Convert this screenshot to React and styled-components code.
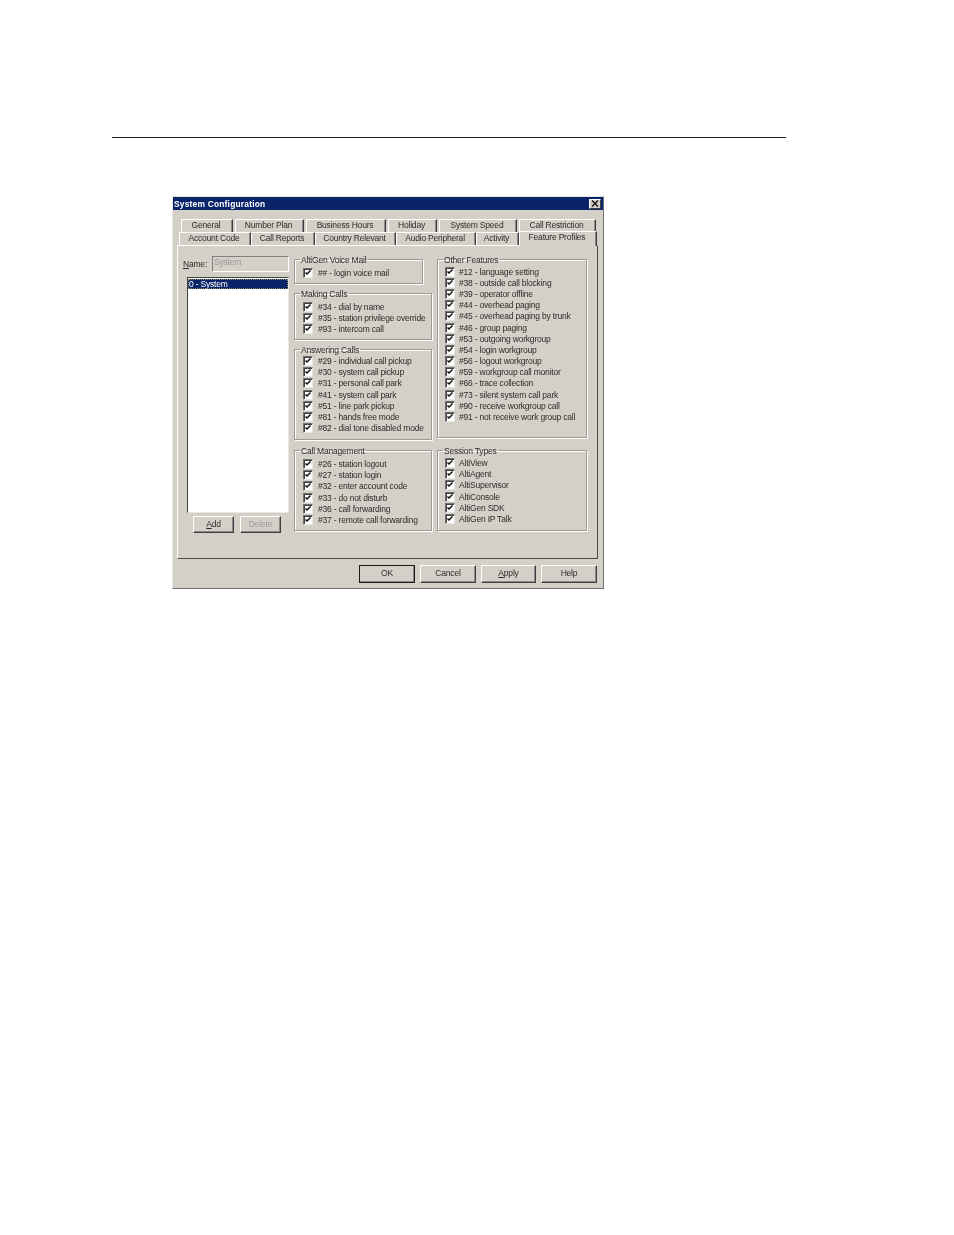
import styled, { createGlobalStyle } from "styled-components";

const GlobalStyle = createGlobalStyle`
  html, body {
    margin: 0;
    background: #ffffff;
    font-family: "Liberation Sans", Arial, sans-serif;
  }
`;

const Page = styled.div`
  width: 954px;
  height: 1235px;
  padding-top: 137px;
  box-sizing: border-box;
  overflow: hidden;
`;

const Rule = styled.div`
  width: 674px;
  height: 1px;
  margin-left: 112px;
  background: #1c1c1c;
`;

const Dialog = styled.div`
  width: 432px;
  height: 393px;
  margin: 58px 0 0 172px;
  box-sizing: border-box;
  background: #d4d0c8;
  border: 1px solid;
  border-color: #e8e6e0 #6f6f6f #6f6f6f #e8e6e0;
  display: flex;
  flex-direction: column;
  font-size: 8.5px;
  letter-spacing: -0.2px;
  color: #2c2c2c;
  filter: blur(0.25px);
`;

const TitleBar = styled.div`
  height: 13px;
  flex: none;
  background: #0a246a;
  color: #ffffff;
  font-weight: bold;
  font-size: 8.4px;
  letter-spacing: 0.22px;
  padding: 1px 2px 0 1px;
  box-sizing: border-box;
  display: flex;
  align-items: center;
  justify-content: space-between;
`;

const CloseButton = styled.div`
  width: 12px;
  height: 10px;
  margin-top: -1px;
  box-sizing: border-box;
  background: #d4d0c8;
  border: 1px solid;
  border-color: #ffffff #404040 #404040 #ffffff;
  display: flex;
  align-items: center;
  justify-content: center;
`;

const TabRow = styled.div`
  display: flex;
  height: ${(p) => p.$height}px;
  margin-left: ${(p) => p.$left}px;
  margin-top: ${(p) => p.$top}px;
  flex: none;
`;

const Tab = styled.div`
  width: ${(p) => p.$width}px;
  margin-right: ${(p) => p.$gap || 0}px;
  height: ${(p) => (p.$active ? 15 : 13)}px;
  margin-top: ${(p) => (p.$active ? -1 : 0)}px;
  box-sizing: border-box;
  position: relative;
  z-index: ${(p) => (p.$active ? 2 : 0)};
  background: #d4d0c8;
  border-top: 1px solid #ffffff;
  border-left: 1px solid #ffffff;
  border-right: 1px solid #3c3c3c;
  box-shadow: inset -1px 0 0 #8a8a8a;
  padding-right: 2px;
  text-align: center;
  line-height: 11px;
  white-space: nowrap;
`;

const Panel = styled.div`
  width: 421px;
  height: 314px;
  margin-left: 4px;
  flex: none;
  box-sizing: border-box;
  border: 1px solid;
  border-color: #ffffff #4a4a4a #4a4a4a #ffffff;
  padding: 8px 0 0 9px;
  display: grid;
  grid-template-columns: 102px 138px 150px;
  column-gap: 5px;
  position: relative;
  z-index: 1;
`;

const LeftColumn = styled.div`
  display: flex;
  flex-direction: column;
`;

const NameRow = styled.div`
  display: flex;
  align-items: center;
  height: 17px;
  margin-top: 1px;
  justify-content: space-between;
`;

const NameLabel = styled.span`
  margin-left: -4px;
  & u {
    text-decoration: underline;
  }
`;

const NameInput = styled.div`
  width: 77px;
  height: 16px;
  box-sizing: border-box;
  border: 1px solid;
  border-color: #808080 #ffffff #ffffff #808080;
  color: #9a9a9a;
  line-height: 11px;
  padding-left: 1px;
`;

const ListBox = styled.div`
  width: 102px;
  height: 236px;
  margin-top: 5px;
  box-sizing: border-box;
  background: #ffffff;
  border: 1px solid;
  border-color: #404040 #e8e6e0 #e8e6e0 #404040;
`;

const ListItem = styled.div`
  height: 10px;
  margin: 1px 0 0 0;
  background: #0a246a;
  color: #ffffff;
  line-height: 10px;
  padding-left: 1px;
  outline: 1px dotted #8a8a60;
  outline-offset: -1px;
`;

const ListButtons = styled.div`
  display: flex;
  gap: 6px;
  margin: 3px 0 0 6px;
`;

const Button = styled.div`
  width: ${(p) => p.$width}px;
  height: ${(p) => p.$height}px;
  box-sizing: border-box;
  background: #d4d0c8;
  color: ${(p) => (p.$disabled ? "#9a9a9a" : "#2c2c2c")};
  border: 1px solid;
  border-color: #ffffff #404040 #404040 #ffffff;
  box-shadow: inset -1px -1px 0 #8a8a8a;
  outline: ${(p) => (p.$primary ? "1px solid #1a1a1a" : "none")};
  outline-offset: -1px;
  text-align: center;
  line-height: ${(p) => p.$height - 3}px;
  & u {
    text-decoration: underline;
  }
`;

const GroupColumn = styled.div`
  display: flex;
  flex-direction: column;
`;

const Group = styled.fieldset`
  margin: ${(p) => p.$top || 0}px 0 0 0;
  padding: ${(p) => p.$pad}px 0 0 ${(p) => p.$inset}px;
  width: ${(p) => p.$width || "auto"};
  height: ${(p) => p.$height}px;
  box-sizing: border-box;
  min-width: 0;
  border: 1px solid #9a9a96;
  box-shadow: inset 1px 1px 0 #ffffff, 1px 1px 0 #ffffff;
`;

const Legend = styled.legend`
  margin-left: ${(p) => 5 - p.$inset}px;
  padding: 0 1px;
  height: 10px;
  line-height: 12px;
  white-space: nowrap;
`;

const Row = styled.div`
  display: flex;
  align-items: center;
  height: 11.2px;
  white-space: nowrap;
`;

const Box = styled.span`
  width: 10px;
  height: 10px;
  flex: none;
  margin-right: ${(p) => p.$gap}px;
  box-sizing: border-box;
  background: #ffffff;
  border: 1px solid;
  border-color: #707070 #e8e6e0 #e8e6e0 #707070;
  box-shadow: inset 1px 1px 0 #404040;
  display: flex;
  align-items: center;
  justify-content: center;
`;

const Footer = styled.div`
  display: flex;
  justify-content: flex-end;
  gap: 5px;
  margin-top: 6px;
  padding-right: 6px;
`;

const tabsTop = [
  ["General", 52, 2],
  ["Number Plan", 69, 2],
  ["Business Hours", 80, 2],
  ["Holiday", 49, 2],
  ["System Speed", 78, 2],
  ["Call Restriction", 77, 0],
];

const tabsBottom = [
  ["Account Code", 72],
  ["Call Reports", 64],
  ["Country Relevant", 81],
  ["Audio Peripheral", 80],
  ["Activity", 43],
  ["Feature Profiles", 78, true],
];

const voiceMail = ["## - login voice mail"];
const makingCalls = [
  "#34 - dial by name",
  "#35 - station privilege override",
  "#93 - intercom call",
];
const answeringCalls = [
  "#29 - individual call pickup",
  "#30 - system call pickup",
  "#31 - personal call park",
  "#41 - system call park",
  "#51 - line park pickup",
  "#81 - hands free mode",
  "#82 - dial tone disabled mode",
];
const callManagement = [
  "#26 - station logout",
  "#27 - station login",
  "#32 - enter account code",
  "#33 - do not disturb",
  "#36 - call forwarding",
  "#37 - remote call forwarding",
];
const otherFeatures = [
  "#12 - language setting",
  "#38 - outside call blocking",
  "#39 - operator offline",
  "#44 - overhead paging",
  "#45 - overhead paging by trunk",
  "#46 - group paging",
  "#53 - outgoing workgroup",
  "#54 - login workgroup",
  "#56 - logout workgroup",
  "#59 - workgroup call monitor",
  "#66 - trace collection",
  "#73 - silent system call park",
  "#90 - receive workgroup call",
  "#91 - not receive work group call",
];
const sessionTypes = [
  "AltiView",
  "AltiAgent",
  "AltiSupervisor",
  "AltiConsole",
  "AltiGen SDK",
  "AltiGen IP Talk",
];

function Check({ gap }) {
  return (
    <Box $gap={gap}>
      <svg width="8" height="8" viewBox="0 0 8 8">
        <path d="M1.5 3.5 L3 5 L6.5 1.5" fill="none" stroke="#111" strokeWidth="1.5" />
      </svg>
    </Box>
  );
}

function CheckGroup({ title, items, height, top, inset, gap, width, pad }) {
  return (
    <Group $height={height} $top={top} $inset={inset} $width={width} $pad={pad}>
      <Legend $inset={inset}>{title}</Legend>
      {items.map((item) => (
        <Row key={item}>
          <Check gap={gap} />
          {item}
        </Row>
      ))}
    </Group>
  );
}

export default function App() {
  return (
    <Page>
      <GlobalStyle />
      <Rule />
      <Dialog>
        <TitleBar>
          System Configuration
          <CloseButton>
            <svg width="8" height="7" viewBox="0 0 8 7">
              <path d="M1 0.5 L7 6.5 M7 0.5 L1 6.5" stroke="#111" strokeWidth="1.4" />
            </svg>
          </CloseButton>
        </TitleBar>
        <TabRow $left={8} $top={9} $height={13}>
          {tabsTop.map(([label, width, gap]) => (
            <Tab key={label} $width={width} $gap={gap}>
              {label}
            </Tab>
          ))}
        </TabRow>
        <TabRow $left={6} $top={0} $height={13}>
          {tabsBottom.map(([label, width, active]) => (
            <Tab key={label} $width={width} $active={active}>
              {label}
            </Tab>
          ))}
        </TabRow>
        <Panel>
          <LeftColumn>
            <NameRow>
              <NameLabel>
                <u>N</u>ame:
              </NameLabel>
              <NameInput>System</NameInput>
            </NameRow>
            <ListBox>
              <ListItem>0 - System</ListItem>
            </ListBox>
            <ListButtons>
              <Button $width={41} $height={17}>
                <u>A</u>dd
              </Button>
              <Button $width={41} $height={17} $disabled>
                Delete
              </Button>
            </ListButtons>
          </LeftColumn>
          <GroupColumn>
            <CheckGroup title="AltiGen Voice Mail" items={voiceMail} height={30} inset={8} gap={5} width="129px" pad={3.4} />
            <CheckGroup title="Making Calls" items={makingCalls} height={52} top={4} inset={8} gap={5} pad={3.4} />
            <CheckGroup title="Answering Calls" items={answeringCalls} height={96} top={4} inset={8} gap={5} pad={1.4} />
            <CheckGroup title="Call Management" items={callManagement} height={86} top={5} inset={8} gap={5} pad={3.5} />
          </GroupColumn>
          <GroupColumn>
            <CheckGroup title="Other Features" items={otherFeatures} height={184} inset={7} gap={4} pad={2} />
            <CheckGroup title="Session Types" items={sessionTypes} height={86} top={7} inset={7} gap={4} pad={2.5} />
          </GroupColumn>
        </Panel>
        <Footer>
          <Button $width={56} $height={18} $primary>OK</Button>
          <Button $width={56} $height={18}>Cancel</Button>
          <Button $width={55} $height={18}>
            <u>A</u>pply
          </Button>
          <Button $width={56} $height={18}>Help</Button>
        </Footer>
      </Dialog>
    </Page>
  );
}
